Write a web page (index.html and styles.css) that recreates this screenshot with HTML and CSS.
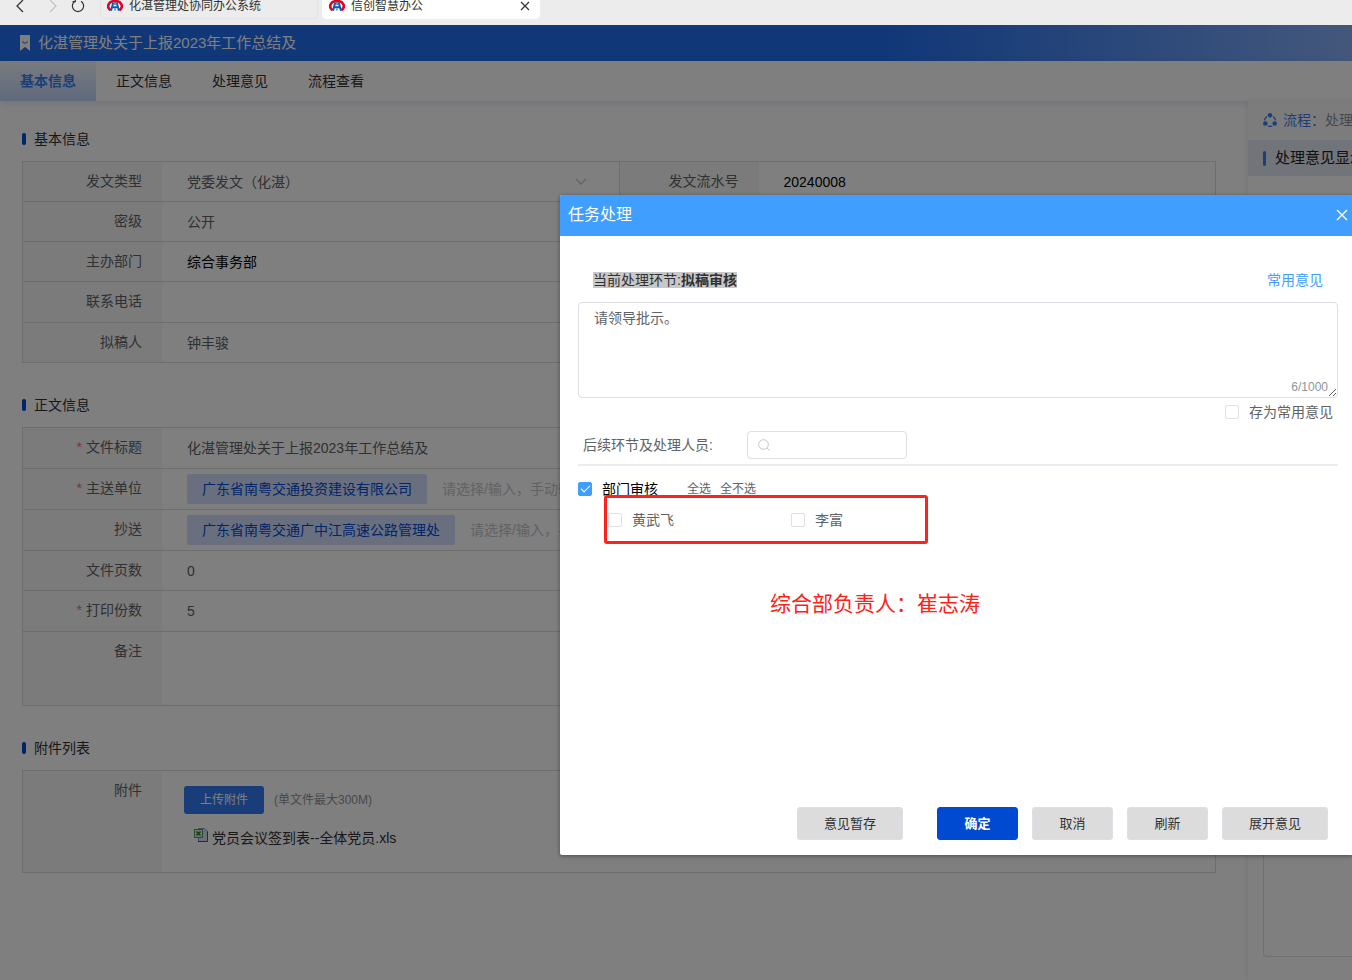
FILE: index.html
```html
<!DOCTYPE html>
<html lang="zh-CN">

<head>
    <meta charset="UTF-8">
    <meta name="viewport" content="width=device-width, initial-scale=1.0">
    <title>信创智慧办公</title>
    <link rel="stylesheet" href="styles.css">
</head>

<body>
    <svg class="sprite" aria-hidden="true">
        <symbol id="logo" viewBox="0 0 16 16">
            <path d="M3.500 12.200C-1 9 1.500 3 8 3s9 6 4.500 9.200" fill="#fff" stroke="#e60022" stroke-width="2.600" />
            <path d="M6.300 4.500L4 12.800M9.700 4.500L12 12.800M5 9.300h6" fill="none" stroke="#0b5cad" stroke-width="2" />
            <path d="M8 4v3M8 10.500v2" stroke="#0b5cad" stroke-width="1.200" />
        </symbol>
    </svg>

    <div class="browser">
        <div class="browser-nav">
            <button aria-label="后退">
                <svg width="10" height="14" viewBox="0 0 10 14"><path d="M8 1L2 7l6 6" fill="none" stroke="#333" stroke-width="1.300" /></svg>
            </button>
            <button aria-label="前进">
                <svg width="10" height="14" viewBox="0 0 10 14"><path d="M2 1l6 6-6 6" fill="none" stroke="#c4c4c4" stroke-width="1.300" /></svg>
            </button>
            <button aria-label="刷新页面">
                <svg width="14" height="14" viewBox="0 0 14 14"><path d="M4 2.200a5.600 5.600 0 1 0 6 0M4.300 0v2.700H1.600" fill="none" stroke="#333" stroke-width="1.200" /></svg>
            </button>
        </div>
        <div class="browser-tabs">
            <div class="browser-tab">
                <svg class="tab-logo"><use href="#logo" /></svg>
                <span>化湛管理处协同办公系统</span>
            </div>
            <div class="browser-tab current">
                <svg class="tab-logo"><use href="#logo" /></svg>
                <span>信创智慧办公</span>
                <button class="tab-close" aria-label="关闭标签">
                    <svg width="10" height="10" viewBox="0 0 10 10"><path d="M1 1l8 8M9 1L1 9" stroke="#333" stroke-width="1.200" /></svg>
                </button>
            </div>
        </div>
    </div>

    <div class="app">
        <header class="page-header">
            <svg width="10" height="16" viewBox="0 0 10 16"><path d="M0 0h10v16l-5-4-5 4z" fill="#fff" /><path d="M2.500 6.500Q5 10 7.500 6.500" fill="none" stroke="#206ef0" stroke-width="1.200" /></svg>
            <h1>化湛管理处关于上报2023年工作总结及</h1>
        </header>

        <nav class="page-nav">
            <a href="#basic" class="active">基本信息</a>
            <a href="#content">正文信息</a>
            <a href="#opinion">处理意见</a>
            <a href="#flow">流程查看</a>
        </nav>

        <div class="layout">
            <main class="main">
                <h2 class="section-title" id="basic">基本信息</h2>
                <div class="form">
                    <div class="form-row split">
                        <div class="field">
                            <label for="docType">发文类型</label>
                            <div class="value select-wrap">
                                <select id="docType">
                                    <option>党委发文（化湛）</option>
                                </select>
                                <svg width="12" height="8" viewBox="0 0 12 8"><path d="M1 1l5 5 5-5" fill="none" stroke="#c0c4cc" stroke-width="1.300" /></svg>
                            </div>
                        </div>
                        <div class="field">
                            <label for="serial">发文流水号</label>
                            <div class="value"><input class="dark" id="serial" type="text" value="20240008"></div>
                        </div>
                    </div>
                    <div class="form-row">
                        <label for="secret">密级</label>
                        <div class="value">
                            <select id="secret">
                                <option>公开</option>
                            </select>
                        </div>
                    </div>
                    <div class="form-row">
                        <label for="dept">主办部门</label>
                        <div class="value"><input class="dark" id="dept" type="text" value="综合事务部"></div>
                    </div>
                    <div class="form-row tall">
                        <label for="phone">联系电话</label>
                        <div class="value"><input id="phone" type="text"></div>
                    </div>
                    <div class="form-row">
                        <label for="drafter">拟稿人</label>
                        <div class="value"><input id="drafter" type="text" value="钟丰骏"></div>
                    </div>
                </div>

                <h2 class="section-title" id="content">正文信息</h2>
                <div class="form">
                    <div class="form-row tall">
                        <label for="docTitle" class="required">文件标题</label>
                        <div class="value"><input id="docTitle" type="text" value="化湛管理处关于上报2023年工作总结及"></div>
                    </div>
                    <div class="form-row tall">
                        <label for="sendTo" class="required">主送单位</label>
                        <div class="value">
                            <span class="tag">广东省南粤交通投资建设有限公司</span>
                            <input id="sendTo" type="text" placeholder="请选择/输入，手动输入">
                        </div>
                    </div>
                    <div class="form-row tall">
                        <label for="copyTo">抄送</label>
                        <div class="value">
                            <span class="tag">广东省南粤交通广中江高速公路管理处</span>
                            <input id="copyTo" type="text" placeholder="请选择/输入，手动输入">
                        </div>
                    </div>
                    <div class="form-row">
                        <label for="pages">文件页数</label>
                        <div class="value"><input id="pages" type="text" value="0"></div>
                    </div>
                    <div class="form-row tall">
                        <label for="copies" class="required">打印份数</label>
                        <div class="value"><input id="copies" type="text" value="5"></div>
                    </div>
                    <div class="form-row remark">
                        <label for="remark">备注</label>
                        <div class="value"><textarea id="remark"></textarea></div>
                    </div>
                </div>

                <h2 class="section-title">附件列表</h2>
                <div class="form">
                    <div class="form-row">
                        <span class="label">附件</span>
                        <div class="attachments">
                            <div class="upload">
                                <button class="upload-button">上传附件</button>
                                <span class="hint">(单文件最大300M)</span>
                            </div>
                            <a href="#file" class="file">
                                <svg width="14" height="14" viewBox="0 0 14 14">
                                    <path d="M4.500.5h6l3 3v10h-9z" fill="#d5e0f8" stroke="#8495c4" />
                                    <path d="M13.500 3.500v10H4" fill="none" stroke="#3c5596" />
                                    <path d="M.5 1.500h8v8h-8z" fill="#dff0da" stroke="#4a9a4a" />
                                    <path d="M2.500 3.500l4 4M6.500 3.500l-4 4" stroke="#2c7a2c" stroke-width="1.600" />
                                </svg>
                                <span>党员会议签到表--全体党员.xls</span>
                            </a>
                        </div>
                    </div>
                </div>
            </main>

            <aside class="sidebar">
                <div class="flow-line">
                    <svg width="14" height="14" viewBox="0 0 14 14">
                        <g fill="#3a7ff0"><circle cx="7" cy="2.300" r="2.300" /><circle cx="2.300" cy="10.500" r="2.300" /><circle cx="11.700" cy="10.500" r="2.300" /></g>
                        <path d="M4 3.500A5.500 5.500 0 0 0 1.500 7.300M10 3.500a5.500 5.500 0 0 1 2.500 3.800M4.800 13a6 6 0 0 0 4.400 0" fill="none" stroke="#3a7ff0" stroke-width="1.300" />
                    </svg>
                    <span class="flow-label">流程：</span>
                    <span>处理</span>
                </div>
                <h3 class="opinion-title">处理意见显示</h3>
                <div class="opinion-box"></div>
            </aside>
        </div>

        <div class="mask"></div>
    </div>

    <div class="dialog" role="dialog" aria-labelledby="dialogTitle">
        <div class="dialog-header">
            <h2 id="dialogTitle">任务处理</h2>
            <button class="dialog-close" aria-label="关闭">
                <svg width="12" height="12" viewBox="0 0 12 12"><path d="M1 1l10 10M11 1L1 11" stroke="#fff" stroke-width="1.400" /></svg>
            </button>
        </div>
        <div class="dialog-body">
            <div class="step-line">
                <label for="opinion" class="step">当前处理环节:<b>拟稿审核</b></label>
                <a href="#common">常用意见</a>
            </div>
            <div class="opinion-input">
                <textarea id="opinion" maxlength="1000">请领导批示。</textarea>
                <span class="counter">6/1000</span>
            </div>
            <div class="save-line">
                <label class="check"><input type="checkbox">存为常用意见</label>
            </div>
            <div class="search-line">
                <label for="search">后续环节及处理人员:</label>
                <div class="search-box">
                    <svg width="12" height="12" viewBox="0 0 12 12"><circle cx="5.500" cy="5.500" r="4.800" fill="none" stroke="#c0c4cc" /><path d="M9 9l2.500 2.500" stroke="#c0c4cc" /></svg>
                    <input id="search" type="text">
                </div>
            </div>
            <div class="group-line">
                <label class="check group"><input type="checkbox" checked>部门审核</label>
                <button class="text-button">全选</button>
                <button class="text-button">全不选</button>
            </div>
            <div class="people">
                <label class="check"><input type="checkbox">黄武飞</label>
                <label class="check"><input type="checkbox">李富</label>
            </div>
            <p class="note">综合部负责人：崔志涛</p>
        </div>
        <div class="dialog-footer">
            <button class="button draft">意见暂存</button>
            <button class="button primary">确定</button>
            <button class="button">取消</button>
            <button class="button">刷新</button>
            <button class="button">展开意见</button>
        </div>
    </div>
</body>

</html>
```

FILE: styles.css
```css
* {
    box-sizing: border-box;
}

body {
    margin: 0;
    min-height: 100vh;
    display: flex;
    flex-direction: column;
    position: relative;
    overflow-x: hidden;
    font-family: "Liberation Sans", "Noto Sans CJK SC", sans-serif;
    font-size: 14px;
    line-height: 20px;
    color: #606266;
    background-color: #fff;
}

h1,
h2,
h3,
p {
    margin: 0;
    font-weight: normal;
}

a {
    color: inherit;
    text-decoration: none;
}

button,
input,
select,
textarea {
    font: inherit;
    color: inherit;
    margin: 0;
    padding: 0;
    border: 0;
    background: none;
    outline: none;
}

button {
    cursor: pointer;
}

svg {
    display: block;
    flex: none;
}

.sprite {
    position: absolute;
    width: 0;
    height: 0;
}

/* Browser bar, scrolled half out of view */
.browser {
    height: 25px;
    display: flex;
    align-items: flex-end;
    padding: 0 15px 6px;
    overflow: hidden;
    background-color: #ececec;
    font-size: 12px;
    color: #333;
}

.browser-nav {
    display: grid;
    grid-template-columns: 33px 23px 29px;
    align-items: center;
    justify-items: start;
    height: 26px;
    flex: none;
}

.browser-tabs {
    display: flex;
    gap: 4px;
}

.browser-tab {
    width: 218px;
    height: 26px;
    display: flex;
    align-items: center;
    padding: 0 9px 0 6px;
    border: 1px solid #e4e4e4;
    border-radius: 4px;
}

.browser-tab.current {
    background-color: #fff;
    border-color: #fff;
}

.tab-logo {
    width: 16px;
    height: 16px;
    margin-right: 6px;
}

.tab-close {
    margin-left: auto;
}

/* Page under the mask */
.app {
    flex: 1;
    display: flex;
    flex-direction: column;
    position: relative;
}

.mask {
    position: absolute;
    inset: 0;
    background-color: rgba(0, 0, 0, 0.5);
}

.page-header {
    height: 36px;
    display: flex;
    align-items: center;
    gap: 8px;
    padding: 0 20px;
    color: #fff;
    background: linear-gradient(90deg, #206ef0 65%, #88b0f8);
}

.page-header h1 {
    font-size: 15px;
}

.page-nav {
    display: flex;
    height: 40px;
    color: #303133;
    box-shadow: 0 2px 8px rgba(30, 70, 140, 0.15);
}

.page-nav a {
    padding: 0 20px;
    line-height: 40px;
}

.page-nav .active {
    font-weight: bold;
    color: #3a7ff0;
    background: linear-gradient(#f4f7fd, #bfd4fa);
}

.layout {
    flex: 1;
    display: flex;
}

.main {
    flex: 1;
    padding: 0 32px 0 22px;
}

.section-title {
    display: flex;
    align-items: center;
    gap: 8px;
    height: 64px;
    padding-top: 20px;
    font-size: 14px;
    color: #303133;
}

.section-title::before {
    content: "";
    width: 4px;
    height: 12px;
    border-radius: 2px;
    background-color: #004ad2;
}

.section-title:first-child {
    height: 60px;
    padding-top: 16px;
}

.form {
    border: 1px solid #dcdcde;
    border-bottom: 0;
}

.form-row,
.field {
    display: flex;
    min-height: 40px;
}

.form-row {
    border-bottom: 1px solid #dcdcde;
}

.form-row.tall {
    min-height: 41px;
}

.form-row.remark {
    min-height: 74px;
}

.field {
    flex: 1;
    min-height: 39px;
}

.field + .field {
    border-left: 1px solid #dcdcde;
}

.form label,
.form .label {
    width: 139px;
    flex: none;
    padding-right: 20px;
    text-align: right;
    line-height: 39px;
    background-color: #f7f7f7;
}

.required::before {
    content: "*";
    margin-right: 4px;
    color: #f56c6c;
}

.value {
    flex: 1;
    display: flex;
    align-items: center;
    gap: 15px;
    padding: 0 25px;
}

.value input,
.value select,
.value textarea {
    flex: 1;
    min-width: 0;
    appearance: none;
    resize: none;
}

.value textarea {
    height: 60px;
}

.value .dark {
    color: #000;
}

.select-wrap {
    padding-right: 32px;
}

.tag {
    padding: 0 15px;
    line-height: 30px;
    border-radius: 2px;
    color: #004ad2;
    background-color: #d2dffc;
}

.value input::placeholder {
    color: #c0c4cc;
    opacity: 1;
}

.attachments {
    padding: 15px 22px 24px;
}

.upload {
    display: flex;
    align-items: center;
    gap: 10px;
    margin-bottom: 14px;
    font-size: 12px;
    color: #909399;
}

.upload-button {
    height: 28px;
    padding: 0 16px;
    border-radius: 3px;
    color: #fff;
    background-color: #327af0;
}

.file {
    display: flex;
    gap: 4px;
    padding-left: 10px;
    color: #303133;
}

.sidebar {
    width: 104px;
    flex: none;
    display: flex;
    flex-direction: column;
    overflow: hidden;
    white-space: nowrap;
    box-shadow: 0 0 6px rgba(0, 0, 0, 0.1);
}

.flow-line {
    display: flex;
    align-items: center;
    height: 39px;
    padding: 0 0 2px 15px;
    color: #909399;
    background-color: #f9f9f9;
}

.flow-label {
    margin-left: 6px;
    color: #3a7ff0;
}

.opinion-title {
    display: flex;
    align-items: center;
    gap: 9px;
    height: 36px;
    padding-left: 15px;
    font-size: 15px;
    color: #222;
    background-color: #e2e9f2;
}

.opinion-title::before {
    content: "";
    flex: none;
    width: 3px;
    height: 15px;
    border-radius: 2px;
    background-color: #3a7ff0;
}

.opinion-box {
    flex: 1;
    margin: 20px 0 23px 15px;
    border: 1px solid #dcdfe6;
    border-right: 0;
    border-radius: 4px 0 0 4px;
}

/* Task dialog */
.dialog {
    position: absolute;
    top: 195px;
    left: 560px;
    right: 0;
    border-radius: 2px 0 0 2px;
    overflow: hidden;
    background-color: #fff;
    box-shadow: 0 1px 4px rgba(0, 0, 0, 0.4);
}

.dialog-header {
    display: flex;
    align-items: center;
    justify-content: space-between;
    height: 41px;
    padding: 0 4px 2px 8px;
    color: #fff;
    background-color: #409eff;
}

.dialog-header h2 {
    font-size: 16px;
}

.dialog-body {
    min-height: 571px;
    padding: 34px 14px 0 18px;
}

.step-line {
    display: flex;
    align-items: center;
    justify-content: space-between;
    padding: 0 15px;
    margin-bottom: 12px;
}

.step-line a {
    color: #409eff;
}

.step {
    line-height: 16px;
    color: #303133;
    background-color: #c8c8c8;
}

.opinion-input {
    position: relative;
}

.opinion-input textarea {
    display: block;
    width: 100%;
    height: 96px;
    padding: 5px 15px;
    border: 1px solid #dcdfe6;
    border-radius: 4px;
    resize: vertical;
}

.counter {
    position: absolute;
    right: 10px;
    bottom: 1px;
    font-size: 12px;
    color: #909399;
}

.save-line {
    display: flex;
    justify-content: flex-end;
    padding: 4px 5px 9px 0;
}

.check {
    display: flex;
    align-items: center;
    gap: 10px;
}

.check input {
    appearance: none;
    width: 14px;
    height: 14px;
    border: 1px solid #dcdfe6;
    border-radius: 2px;
    background-color: #fff;
}

.check input:checked {
    display: grid;
    place-items: center;
    border-color: #409eff;
    background-color: #409eff;
}

.check input:checked::after {
    content: "";
    width: 8px;
    height: 4px;
    margin-bottom: 3px;
    border: solid #fff;
    border-width: 0 0 1px 1px;
    transform: rotate(-45deg);
}

.search-line {
    display: flex;
    align-items: center;
    padding: 0 5px 5px;
    border-bottom: 2px solid #ebebf2;
}

.search-line label {
    width: 164px;
}

.search-box {
    display: flex;
    align-items: center;
    width: 160px;
    height: 28px;
    padding: 0 10px;
    border: 1px solid #dcdfe6;
    border-radius: 4px;
}

.search-box input {
    flex: 1;
    min-width: 0;
}

.group-line {
    display: flex;
    align-items: center;
    gap: 9px;
    padding-top: 13px;
}

.group {
    margin-right: 20px;
    color: #000;
}

.text-button {
    font-size: 12px;
}

.people {
    position: relative;
    display: grid;
    grid-template-columns: 183px 1fr;
    align-items: center;
    width: 324px;
    height: 49px;
    margin: -4px 0 0 26px;
    padding-left: 1px;
    border: 3px solid #ff2218;
    border-radius: 3px;
}

.note {
    margin: 45px 0 0 192px;
    font-size: 21px;
    line-height: 30px;
    color: #fc2217;
}

.dialog-footer {
    display: flex;
    justify-content: flex-end;
    gap: 14px;
    padding: 0 24px 15px;
}

.button {
    min-width: 81px;
    height: 33px;
    padding: 0 26px;
    border: 1px solid #dcdfe6;
    border-radius: 3px;
    font-size: 13px;
    color: #303133;
    background-color: #dcdcdc;
}

.button.primary {
    border-color: #004ad2;
    font-weight: bold;
    color: #fff;
    background-color: #004ad2;
}

.draft {
    margin-right: 20px;
}
```
